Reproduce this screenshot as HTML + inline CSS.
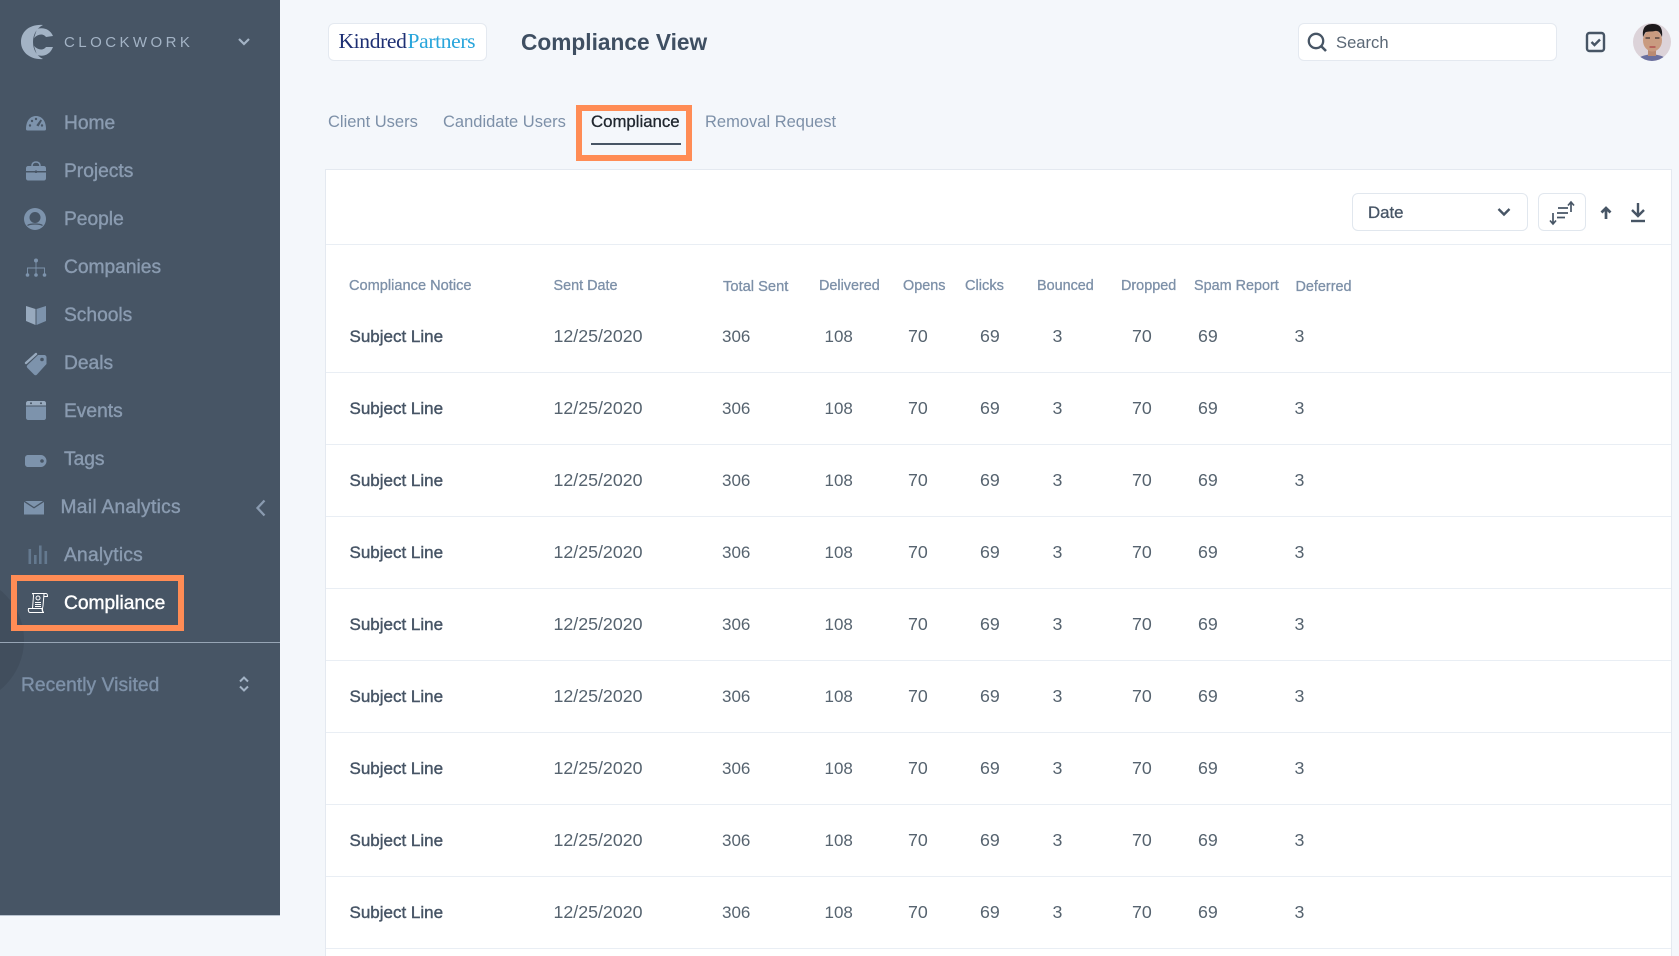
<!DOCTYPE html>
<html><head><meta charset="utf-8"><style>
html,body{margin:0;padding:0;overflow:hidden}
body{width:1679px;height:956px;position:relative;background:#f4f7fb;font-family:"Liberation Sans",sans-serif;color:#4a5869}
div,span,svg{position:absolute}
.side{left:0;top:0;width:280px;height:915px;background:#475565;overflow:hidden;box-shadow:0 1px 0 #b9c3cf}
.nav{left:64px;font-size:19.2px;line-height:24px;color:#8a9bb0;white-space:nowrap;-webkit-text-stroke:.4px #8a9bb0}
.tab{top:110px;font-size:16.5px;line-height:24px;color:#7d90a8;white-space:nowrap}
.org{border:6px solid #ff8c55;box-sizing:border-box}
.card{background:#fff;border:1.5px solid #e4e9f0;box-sizing:border-box;border-radius:6px}
.th{font-size:14.4px;line-height:18px;color:#7d90a8;white-space:nowrap;-webkit-text-stroke:.3px #7d90a8}
.row{left:326px;width:1345px;height:72px;border-bottom:1.5px solid #e9eef4;box-sizing:border-box}
.row span{top:23px;font-size:17.8px;line-height:24px;color:#56636f;white-space:nowrap}
.row .a{left:23.5px;top:24px;color:#465465;-webkit-text-stroke:.4px #465465;font-size:17px}
.row .b{left:227.5px}.row .c{left:396px;top:24px;font-size:17px}.row .d{left:498.5px;top:24px;font-size:17px}.row .e{left:582px}.row .f{left:654px}.row .g{left:726.5px}.row .h{left:806px}.row .i{left:872px}.row .j{left:968.5px}
</style></head><body>

<div class="side">
<div style="left:-104px;top:576px;width:128px;height:128px;border-radius:50%;background:#414e5d"></div>
<svg style="left:19px;top:23px" width="38" height="38" viewBox="19 23 38 38" fill="#a3b3c5"><path d="M43 25C29 24 21 32 21 42C21 52 30 60 43 59C37 56 33 50 33 42C33 34 37 28 43 25Z"/><path d="M37 29C43 27 50 29 53 36L46 37C43 33 38 34 34 38Z"/><path d="M53 47C50 55 43 57 37 55L34 46C38 50 43 51 46 47Z"/></svg>
<span style="left:64px;top:33px;font-size:15px;line-height:20px;letter-spacing:3.45px;color:#a3b3c5;white-space:nowrap">CLOCKWORK</span>
<svg style="left:237px;top:36px" width="14" height="12" viewBox="0 0 14 12"><path d="M2 3l5 5 5-5" fill="none" stroke="#a3b3c5" stroke-width="2.2"/></svg>

<svg style="left:24px;top:111px" width="24" height="22" viewBox="0 0 24 22" fill="#7d93ac"><path d="M2 18C2 10 6 5 12 5C18 5 22 10 22 18C22 19 21.500 19.500 20.500 19.500H3.500C2.500 19.500 2 19 2 18Z"/><g fill="#475565"><circle cx="6" cy="14.500" r="1.200"/><circle cx="8" cy="10" r="1.200"/><circle cx="12" cy="8" r="1.200"/><circle cx="18" cy="14.500" r="1.200"/><path d="M16.500 8.500l1.500 1-3.500 6-2.200-1.200z"/></g></svg>
<span class="nav" style="top:112px">Home</span>

<svg style="left:24px;top:160px" width="24" height="22" viewBox="0 0 24 22" fill="#7d93ac"><path d="M8 6C8 3 10 2 12 2C14 2 16 3 16 6" fill="none" stroke="#7d93ac" stroke-width="1.500"/><path d="M4 6H20C21 6 22 7 22 8V11H2V8C2 7 3 6 4 6Z"/><path d="M2 12.500H22V18.500C22 19.500 21 20.500 20 20.500H4C3 20.500 2 19.500 2 18.500Z"/><circle cx="12" cy="11.700" r="1.300" fill="#475565"/></svg>
<span class="nav" style="top:160px">Projects</span>

<svg style="left:24px;top:208px" width="24" height="24" viewBox="0 0 24 24"><circle cx="11" cy="11" r="11" fill="#7d93ac"/><circle cx="11" cy="9.500" r="5.500" fill="#475565"/><path d="M3.500 17.500C6 15.500 16 15.500 18.500 17.500" fill="none" stroke="#475565" stroke-width="1.200"/></svg>
<span class="nav" style="top:208px">People</span>

<svg style="left:25px;top:257px" width="24" height="22" viewBox="0 0 24 22" fill="#7d93ac"><circle cx="11" cy="3.500" r="2"/><circle cx="2.500" cy="18" r="1.800"/><circle cx="11" cy="18" r="1.800"/><circle cx="19.500" cy="18" r="1.800"/><path d="M11 5V18M2.500 18V11H19.500V18" fill="none" stroke="#7d93ac" stroke-width=".9"/></svg>
<span class="nav" style="top:256px">Companies</span>

<svg style="left:25px;top:304px" width="23" height="22" viewBox="0 0 23 22"><path d="M1 2L10.500 5V21L1 17Z" fill="#98aabe"/><path d="M11.500 5L21 2V17L11.500 21Z" fill="#7d93ac"/></svg>
<span class="nav" style="top:304px">Schools</span>

<svg style="left:24px;top:351px" width="24" height="26" viewBox="0 0 24 26"><path d="M2 12L12 3" fill="none" stroke="#98aabe" stroke-width="2.400" stroke-linecap="round"/><path d="M14 4H20C21.500 4 22.500 5 22.500 6.500V13L13 23.500C12 24.500 11 24.500 10 23.500L3.500 17C2.500 16 2.500 15 3.500 14Z" fill="#7d93ac"/><circle cx="18" cy="8.500" r="1.800" fill="#475565"/></svg>
<span class="nav" style="top:352px">Deals</span>

<svg style="left:24px;top:399px" width="24" height="23" viewBox="0 0 24 23" fill="#7d93ac"><path d="M4 2H20C21 2 22 3 22 4V6.500H2V4C2 3 3 2 4 2Z" fill="#98aabe"/><path d="M2 7.500H22V19C22 20 21 21 20 21H4C3 21 2 20 2 19Z"/><circle cx="7" cy="4.300" r="1" fill="#475565"/><circle cx="17" cy="4.300" r="1" fill="#475565"/></svg>
<span class="nav" style="top:400px">Events</span>

<svg style="left:24px;top:453px" width="24" height="16" viewBox="0 0 24 16"><path d="M4 2H17C20 2 22.500 5 22.500 8C22.500 11 20 14 17 14H4C2.500 14 1 13 1 11V5C1 3 2.500 2 4 2Z" fill="#7d93ac"/><circle cx="18" cy="8" r="1.800" fill="#475565"/></svg>
<span class="nav" style="top:448px">Tags</span>

<svg style="left:23px;top:500px" width="23" height="16" viewBox="0 0 23 16"><path d="M1 2L11 8.500L21 2V14.500H1Z" fill="#7d93ac"/><path d="M2 1H20L11 7Z" fill="#7d93ac"/></svg>
<span class="nav" style="left:60.500px;top:496px;letter-spacing:.3px">Mail Analytics</span>
<svg style="left:254px;top:497px" width="14" height="22" viewBox="0 0 14 22"><path d="M10.500 3.500L3.500 11L10.500 18.500" fill="none" stroke="#8a9bb0" stroke-width="2.300"/></svg>

<svg style="left:27px;top:544px" width="22" height="22" viewBox="0 0 22 22" fill="#64798f"><rect x="1.500" y="5" width="2.600" height="15"/><rect x="7" y="11" width="2.600" height="9"/><rect x="12" y="1.500" width="2.600" height="18.500"/><rect x="17.500" y="7" width="2.600" height="13"/></svg>
<span class="nav" style="top:544px;letter-spacing:.25px">Analytics</span>

<div class="org" style="left:11px;top:575px;width:173px;height:56px"></div>
<svg style="left:27px;top:592px" width="22" height="22" viewBox="0 0 22 22" fill="none" stroke="#fff" stroke-width="1"><path d="M5 1.500H19C20 1.500 20.500 2.500 20.500 4.500H17"/><path d="M5 1.500C6.500 1.500 6.500 3 6.500 4L5.500 16.500H15C15 18 15.500 20.500 17 20.500H3C1.500 20.500 1 18 1.500 16.500H5.500"/><path d="M17 20.500C15.500 20.500 15 17 16 14L17 2"/><circle cx="11" cy="6" r="2"/><path d="M8 10.500H14M8 12.500H14M8 14.500H14"/></svg>
<span class="nav" style="top:592px;color:#fff;-webkit-text-stroke:.4px #fff">Compliance</span>

<div style="left:0;top:642px;width:280px;height:1px;background:#97a5b5"></div>
<span class="nav" style="left:21px;top:674px;color:#7e91a8;-webkit-text-stroke:.4px #7e91a8;letter-spacing:.07px">Recently Visited</span>
<svg style="left:237px;top:675px" width="14" height="18" viewBox="0 0 14 18"><path d="M3 6.500L7 2.500L11 6.500M3 11.500L7 15.500L11 11.500" fill="none" stroke="#a3b3c5" stroke-width="2"/></svg>
</div>

<div class="card" style="left:328px;top:23px;width:159px;height:38px"></div>
<span style="left:338.500px;top:27px;font:21.5px/28px 'Liberation Serif',serif;letter-spacing:-.35px;white-space:nowrap;color:#1d2f73">Kindred<span style="position:static;color:#28a5db;margin-left:1px">Partners</span></span>
<span style="left:521px;top:27px;font-size:22.7px;font-weight:bold;line-height:30px;color:#3f4f62;white-space:nowrap">Compliance View</span>

<span class="tab" style="left:328px">Client Users</span>
<span class="tab" style="left:443px">Candidate Users</span>
<span class="tab" style="left:591px;color:#20272f;-webkit-text-stroke:.3px #20272f;font-size:16.8px">Compliance</span>
<span class="tab" style="left:705px">Removal Request</span>
<div style="left:591px;top:143px;width:90px;height:2px;background:#475565"></div>
<div class="org" style="left:576px;top:105px;width:116px;height:56px"></div>

<div class="card" style="left:1298px;top:23px;width:259px;height:38px"></div>
<svg style="left:1305px;top:30px" width="24" height="24" viewBox="0 0 24 24"><circle cx="11" cy="11" r="7.200" fill="none" stroke="#475565" stroke-width="2.300"/><path d="M16 16L21 21" stroke="#475565" stroke-width="2.600"/></svg>
<span style="left:1336px;top:31px;font-size:16.6px;line-height:24px;color:#5b6876">Search</span>
<svg style="left:1584px;top:30px" width="24" height="24" viewBox="0 0 24 24"><rect x="3" y="3" width="17" height="18" rx="2.500" fill="none" stroke="#475565" stroke-width="2.400"/><path d="M7.500 12L10.500 15L16 9.500" fill="none" stroke="#475565" stroke-width="2.400"/></svg>
<svg style="left:1633px;top:23px" width="38" height="38" viewBox="0 0 38 38"><defs><clipPath id="av"><circle cx="19" cy="19" r="19"/></clipPath></defs><g clip-path="url(#av)"><rect width="38" height="38" fill="#dcd3d9"/><path d="M3 38C6 33 12 32 19 31C26 32 32 33 35 38Z" fill="#6a6f9e"/><rect x="15" y="25" width="8" height="8" fill="#b98a72"/><ellipse cx="19.500" cy="17.500" rx="9.500" ry="11" fill="#c99b80"/><path d="M10 14C9 4 13 1 20 1C27 1 30 5 29 14C27 9 25 7.500 22 8C17 9 13 8 12 10Z" fill="#1d1a1c"/><path d="M12.500 15h4.500M22 15h4.500" stroke="#3c3030" stroke-width="1.300"/><path d="M16.500 24h6" stroke="#b04f4f" stroke-width="1.500"/></g></svg>

<div style="left:324.500px;top:169px;width:1347.500px;height:787px;background:#fff;border:1.5px solid #e4e9f0;border-bottom:0;box-sizing:border-box"></div>
<div style="left:326px;top:243.500px;width:1345px;height:1.5px;background:#e9eef4"></div>

<div class="card" style="left:1352px;top:193px;width:176px;height:38px;border-color:#e1e7ee"></div>
<span style="left:1368px;top:201px;font-size:16.8px;line-height:24px;color:#465465;-webkit-text-stroke:.3px #465465">Date</span>
<svg style="left:1496px;top:206px" width="16" height="12" viewBox="0 0 16 12"><path d="M2.500 3L8 8.500L13.500 3" fill="none" stroke="#475565" stroke-width="2.400"/></svg>
<div class="card" style="left:1538px;top:193px;width:48px;height:38px;border-color:#e1e7ee"></div>
<svg style="left:1548px;top:200px" width="28" height="26" viewBox="0 0 28 26" fill="none" stroke="#475565" stroke-width="1.700"><path d="M5 13V24M2 20.500L5 24L8 20.500"/><path d="M23 2V12M20 5.500L23 2L26 5.500"/><path d="M10 8H20M9 13H20M9 17.500H17"/></svg>
<svg style="left:1597px;top:203px" width="18" height="20" viewBox="0 0 18 20"><path d="M9 16V5.500M4.500 9.500L9 5L13.500 9.500" fill="none" stroke="#475565" stroke-width="2.700"/></svg>
<svg style="left:1628px;top:201px" width="20" height="22" viewBox="0 0 20 22"><path d="M10 2V14.500M4 9L10 15L16 9" fill="none" stroke="#475565" stroke-width="2.400"/><path d="M3 20H17" stroke="#475565" stroke-width="2.400"/></svg>

<span class="th" style="left:349px;top:277px;font-size:14.6px">Compliance Notice</span>
<span class="th" style="left:553.5px;top:277px">Sent Date</span>
<span class="th" style="left:723px;top:278px;font-size:14.7px">Total Sent</span>
<span class="th" style="left:819px;top:277px">Delivered</span>
<span class="th" style="left:903px;top:277px">Opens</span>
<span class="th" style="left:965px;top:277px;font-size:14.6px">Clicks</span>
<span class="th" style="left:1037px;top:277px">Bounced</span>
<span class="th" style="left:1121px;top:277px">Dropped</span>
<span class="th" style="left:1194px;top:277px">Spam Report</span>
<span class="th" style="left:1295.5px;top:278px">Deferred</span>

<div class="row" style="top:301px"><span class="a">Subject Line</span><span class="b">12/25/2020</span><span class="c">306</span><span class="d">108</span><span class="e">70</span><span class="f">69</span><span class="g">3</span><span class="h">70</span><span class="i">69</span><span class="j">3</span></div>
<div class="row" style="top:373px"><span class="a">Subject Line</span><span class="b">12/25/2020</span><span class="c">306</span><span class="d">108</span><span class="e">70</span><span class="f">69</span><span class="g">3</span><span class="h">70</span><span class="i">69</span><span class="j">3</span></div>
<div class="row" style="top:445px"><span class="a">Subject Line</span><span class="b">12/25/2020</span><span class="c">306</span><span class="d">108</span><span class="e">70</span><span class="f">69</span><span class="g">3</span><span class="h">70</span><span class="i">69</span><span class="j">3</span></div>
<div class="row" style="top:517px"><span class="a">Subject Line</span><span class="b">12/25/2020</span><span class="c">306</span><span class="d">108</span><span class="e">70</span><span class="f">69</span><span class="g">3</span><span class="h">70</span><span class="i">69</span><span class="j">3</span></div>
<div class="row" style="top:589px"><span class="a">Subject Line</span><span class="b">12/25/2020</span><span class="c">306</span><span class="d">108</span><span class="e">70</span><span class="f">69</span><span class="g">3</span><span class="h">70</span><span class="i">69</span><span class="j">3</span></div>
<div class="row" style="top:661px"><span class="a">Subject Line</span><span class="b">12/25/2020</span><span class="c">306</span><span class="d">108</span><span class="e">70</span><span class="f">69</span><span class="g">3</span><span class="h">70</span><span class="i">69</span><span class="j">3</span></div>
<div class="row" style="top:733px"><span class="a">Subject Line</span><span class="b">12/25/2020</span><span class="c">306</span><span class="d">108</span><span class="e">70</span><span class="f">69</span><span class="g">3</span><span class="h">70</span><span class="i">69</span><span class="j">3</span></div>
<div class="row" style="top:805px"><span class="a">Subject Line</span><span class="b">12/25/2020</span><span class="c">306</span><span class="d">108</span><span class="e">70</span><span class="f">69</span><span class="g">3</span><span class="h">70</span><span class="i">69</span><span class="j">3</span></div>
<div class="row" style="top:877px"><span class="a">Subject Line</span><span class="b">12/25/2020</span><span class="c">306</span><span class="d">108</span><span class="e">70</span><span class="f">69</span><span class="g">3</span><span class="h">70</span><span class="i">69</span><span class="j">3</span></div>
</body></html>
